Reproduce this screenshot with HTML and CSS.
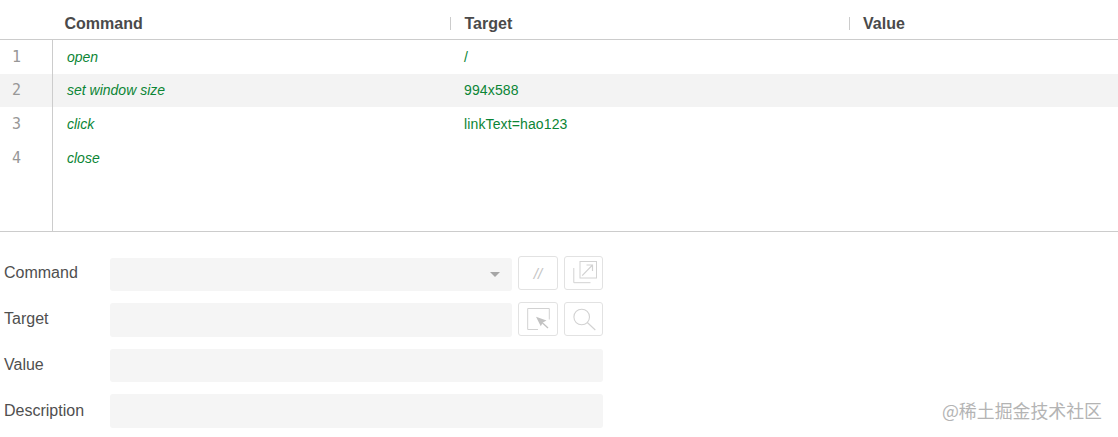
FILE: index.html
```html
<!DOCTYPE html>
<html lang="en">
<head>
<meta charset="utf-8">
<title>Test editor</title>
<link rel="stylesheet" href="styles.css">
</head>
<body>
<section class="table">
  <div class="head">
    <div class="h-index"></div>
    <div class="h-cell h-command">Command</div>
    <div class="h-cell h-target">Target</div>
    <div class="h-cell h-value">Value</div>
  </div>
  <div class="body">
    <div class="row"><div class="idx">1</div><div class="cmd">open</div><div class="tgt">/</div></div>
    <div class="row alt"><div class="idx">2</div><div class="cmd">set window size</div><div class="tgt">994x588</div></div>
    <div class="row"><div class="idx">3</div><div class="cmd">click</div><div class="tgt">linkText=hao123</div></div>
    <div class="row last"><div class="idx">4</div><div class="cmd">close</div><div class="tgt"></div></div>
    <div class="filler"><div class="idx"></div></div>
  </div>
</section>
<section class="form">
  <div class="f-row">
    <label class="f-label">Command</label>
    <div class="f-field short select"><span class="caret"></span></div>
    <button class="btn slash">//</button>
    <button class="btn">
      <svg width="26" height="26" viewBox="0 0 26 26" fill="none" stroke="#d2d2d2"><rect x="9" y="1.500" width="16.500" height="16.500"/><path d="M2.800 8v14.700h16.700"/><path d="M11.200 15.700L21.500 5M15.500 5h6v6" stroke-width="1.200"/></svg>
    </button>
  </div>
  <div class="f-row">
    <label class="f-label">Target</label>
    <div class="f-field short"></div>
    <button class="btn">
      <svg width="26" height="26" viewBox="0 0 26 26" fill="none"><path d="M13 23.500H2.700V2.500h21.600v11" stroke="#d2d2d2"/><path d="M11 10.700l10.500 3.800-3.700 2-2 3.800z" fill="#c2c2c2"/><path d="M17 16.500l6 5.500" stroke="#c2c2c2" stroke-width="1.300"/></svg>
    </button>
    <button class="btn">
      <svg width="26" height="26" viewBox="0 0 26 26" fill="none" stroke="#d2d2d2" stroke-width="1.100"><circle cx="10.700" cy="11" r="7.800"/><path d="M16.300 16.500l8 7.500"/></svg>
    </button>
  </div>
  <div class="f-row">
    <label class="f-label lower">Value</label>
    <div class="f-field"></div>
  </div>
  <div class="f-row">
    <label class="f-label lowest">Description</label>
    <div class="f-field"></div>
  </div>
</section>
<div class="watermark">@稀土掘金技术社区</div>
</body>
</html>
```
FILE: styles.css
```css
* { box-sizing: border-box; }
html, body { margin: 0; padding: 0; }
body {
  width: 1118px;
  height: 437px;
  position: relative;
  overflow: hidden;
  background: #fff;
  font-family: "Liberation Sans", Arial, sans-serif;
  color: #4a4a4a;
}
.table { height: 232px; border-bottom: 1px solid #ccc; display: flex; flex-direction: column; }
.head {
  height: 40px;
  flex: none;
  display: grid;
  grid-template-columns: 52px 398px 399px 1fr;
  align-items: center;
  border-bottom: 1px solid #ccc;
  font-size: 16px;
  font-weight: 700;
  padding-top: 7px;
}
.h-cell { height: 13px; line-height: 13px; padding-left: 13.500px; }
.h-command { padding-left: 12.500px; letter-spacing: 0.02px; }
.h-value { padding-left: 13px; }
.h-target, .h-value { border-left: 1px solid #ccc; }
.body { flex: 1; display: flex; flex-direction: column; }
.row {
  height: 33.500px;
  flex: none;
  display: grid;
  grid-template-columns: 53px 397px 1fr;
  align-items: center;
  font-size: 14px;
  color: #0b8535;
}
.row.last { height: 34.500px; }
.alt { background: #f3f3f3; }
.idx {
  height: 100%;
  display: flex;
  align-items: center;
  padding-left: 12px;
  border-right: 1px solid #ccc;
  font-family: "DejaVu Sans Mono", monospace;
  font-size: 15px;
  color: #979797;
}
.cmd { padding-left: 14px; font-style: italic; }
.tgt { padding-left: 14px; letter-spacing: 0.13px; }
.filler { flex: 1; display: flex; }
.filler .idx { width: 53px; height: auto; }
.form { padding-top: 26px; display: flex; flex-direction: column; gap: 12px; }
.f-row { height: 33.400px; display: flex; align-items: center; }
.f-label { width: 110px; padding-left: 4px; font-size: 16px; color: #4f4f4f; margin-top: -3px; }
.f-label.lower { margin-top: -1px; }
.f-label.lowest { margin-top: 1px; }
.f-field { width: 493px; height: 33.400px; background: #f5f5f5; border-radius: 3px; position: relative; }
.f-field.short { width: 402px; }
.caret {
  position: absolute;
  right: 12px;
  top: 14px;
  width: 0;
  height: 0;
  border-left: 5px solid transparent;
  border-right: 5px solid transparent;
  border-top: 5px solid #a6a6a6;
}
.btn {
  width: 40px;
  height: 34px;
  flex: none;
  margin-left: 6px;
  margin-top: -3px;
  padding: 0;
  background: #fff;
  border: 1px solid #e2e2e2;
  border-radius: 3px;
  display: flex;
  align-items: center;
  justify-content: center;
  font-family: "Liberation Sans", Arial, sans-serif;
}
.btn + .btn { width: 39px; }
.slash { font-size: 15px; font-style: italic; color: #c4c4c4; }
.watermark {
  position: absolute;
  right: 16px;
  top: 398px;
  font-family: "Noto Sans CJK SC", sans-serif;
  font-size: 17.900px;
  line-height: 24px;
  color: #b4b4b4;
}
```
